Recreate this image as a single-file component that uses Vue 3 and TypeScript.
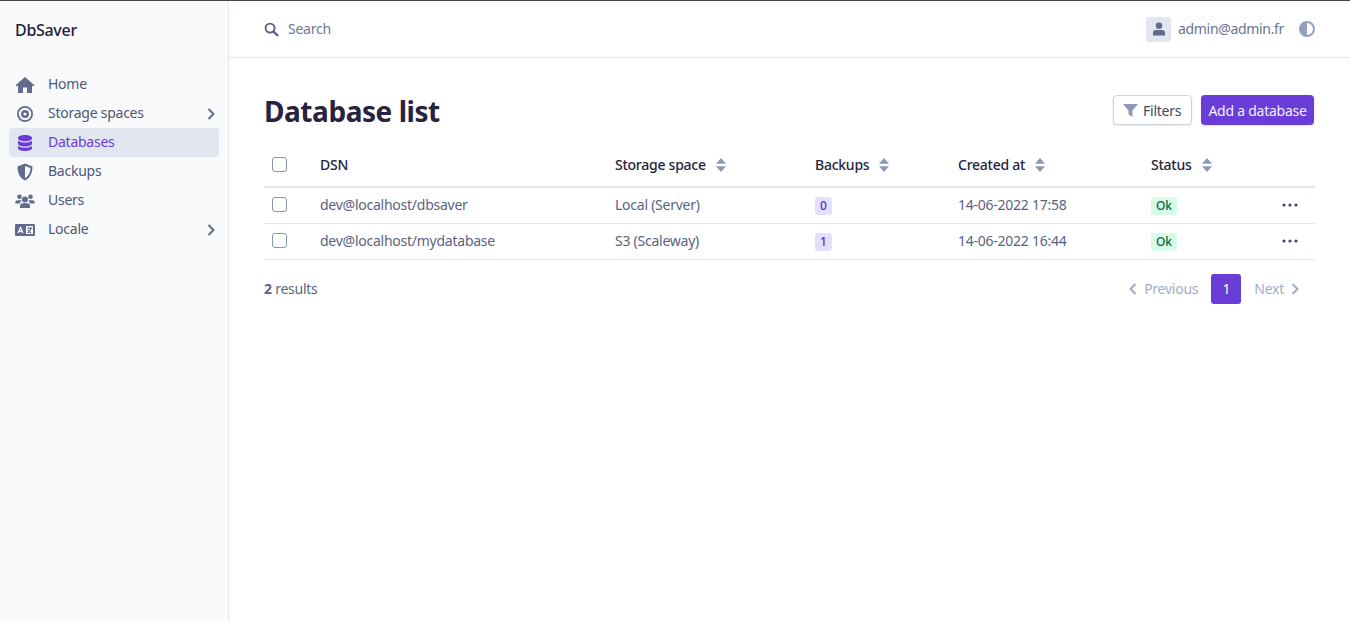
<script setup lang="ts">
interface Row { dsn: string; space: string; backups: number; created: string }
const rows: Row[] = [
  { dsn: 'dev@localhost/dbsaver', space: 'Local (Server)', backups: 0, created: '14-06-2022 17:58' },
  { dsn: 'dev@localhost/mydatabase', space: 'S3 (Scaleway)', backups: 1, created: '14-06-2022 16:44' },
]
const nav = [
  { label: 'Home', icon: 'home' },
  { label: 'Storage spaces', icon: 'target', more: true },
  { label: 'Databases', icon: 'db', active: true },
  { label: 'Backups', icon: 'shield' },
  { label: 'Users', icon: 'users' },
  { label: 'Locale', icon: 'locale', more: true },
]
const sorted = ['Storage space', 'Backups', 'Created at', 'Status']
</script>

<template>
  <div class="page">
    <aside class="side">
      <div class="brand">DbSaver</div>
      <nav class="nav">
        <a v-for="n in nav" :key="n.label" class="item" :class="{ active: n.active }">
          <svg class="ico" viewBox="0 0 20 20" fill="currentColor">
            <path v-if="n.icon === 'home'" d="M10 2 L19.500 10.200 L18.400 11.400 L17 10.300 V18 H12 V12.500 H8 V18 H3 V10.300 L1.600 11.400 L.5 10.200 Z" />
            <path v-else-if="n.icon === 'target'" fill-rule="evenodd" d="M10 2a8 8 0 1 1 0 16a8 8 0 0 1 0-16Zm0 1.800a6.200 6.200 0 1 0 0 12.400a6.200 6.200 0 0 0 0-12.400Zm0 2.200a4 4 0 1 1 0 8a4 4 0 0 1 0-8Zm0 2.400a1.600 1.600 0 1 0 0 3.200a1.600 1.600 0 0 0 0-3.200Z" />
            <path v-else-if="n.icon === 'db'" d="M10 2c4 0 7 1.200 7 2.800v.7C17 7.100 14 8.300 10 8.300S3 7.100 3 5.500v-.7C3 3.200 6 2 10 2ZM3 7.800c1.500 1.200 4.200 1.800 7 1.800s5.500-.6 7-1.800v2.900c0 1.600-3 2.800-7 2.800s-7-1.200-7-2.800ZM3 13c1.500 1.200 4.200 1.800 7 1.800s5.500-.6 7-1.800v2.200c0 1.600-3 2.800-7 2.800s-7-1.200-7-2.800Z" />
            <path v-else-if="n.icon === 'shield'" fill-rule="evenodd" d="M10 1.500 17.500 4.500C17.500 11 15 16 10 18.500C5 16 2.500 11 2.500 4.500ZM10 4v12.300c3.300-2 5.300-5.600 5.500-10.400Z" />
            <path v-else-if="n.icon === 'users'" d="M4.500 3.500a2.300 2.300 0 1 1 0 4.600a2.300 2.300 0 0 1 0-4.600Zm11 0a2.300 2.300 0 1 1 0 4.600a2.300 2.300 0 0 1 0-4.600ZM10 5.500a3 3 0 1 1 0 6a3 3 0 0 1 0-6ZM2.500 9.200h3.300c.3 0 .6.100.8.300a4 4 0 0 0-1.700 3H.3v-1.100c0-1.200 1-2.200 2.200-2.200Zm11.700 0h3.300c1.200 0 2.200 1 2.200 2.200v1.100h-4.900a4 4 0 0 0-1.400-3c.2-.2.500-.3.800-.3ZM7.500 12.300h5c1.400 0 2.500 1.100 2.500 2.500V17H5v-2.200c0-1.400 1.100-2.500 2.500-2.500Z" />
            <path v-else fill-rule="evenodd" d="M1.300 4h17.400c.7 0 1.300.6 1.300 1.300v9.400c0 .7-.6 1.300-1.300 1.300H1.300C.6 16 0 15.400 0 14.700V5.300C0 4.600.6 4 1.300 4ZM11 6v8h7V6ZM5 6.800 2.500 13h1.400l.4-1.100h2.400l.4 1.100h1.400L6 6.800ZM5.500 8.800 4.800 10.800h1.400ZM12.300 7.500h5v1.200h-1c-.3 1.400-.8 2.300-1.400 3l1.700 1-.5.9-2-1.200c-.5.400-1 .7-1.600.9l-.4-1c.5-.2.900-.4 1.300-.7-.4-.5-.7-1-.9-1.500l1-.3c.1.400.3.700.6 1 .4-.5.700-1.200.9-2.100h-2.700Z" />
          </svg>
          <span class="label">{{ n.label }}</span>
          <svg v-if="n.more" class="chev" viewBox="0 0 10 14" fill="none" stroke="currentColor" stroke-width="2"><path d="M2.500 2 7.500 7 2.500 12" /></svg>
        </a>
      </nav>
    </aside>

    <div class="main">
      <header class="top">
        <div class="search">
          <svg class="search-ico" viewBox="0 0 16 16" fill="none" stroke="currentColor" stroke-width="2"><circle cx="6.500" cy="6.500" r="4.800" /><path d="m10 10 5 5" stroke-width="2.400" /></svg>
          <span>Search</span>
        </div>
        <div class="user">
          <span class="avatar">
            <svg viewBox="0 0 14 14" fill="currentColor" width="14" height="14"><circle cx="7" cy="3.700" r="3.300" /><path d="M3.800 8h6.400C12 8 13 9.200 13 10.800V13.500H1V10.800C1 9.200 2 8 3.800 8Z" /></svg>
          </span>
          <span class="email">admin@admin.fr</span>
          <svg class="theme" viewBox="0 0 16 16" width="16" height="16"><circle cx="8" cy="8" r="7" fill="none" stroke="#94a0bd" stroke-width="2" /><path d="M8 1a7 7 0 0 0 0 14Z" fill="#94a0bd" /></svg>
        </div>
      </header>

      <main class="content">
        <div class="heading">
          <h1>Database list</h1>
          <div class="actions">
            <button class="btn ghost">
              <svg viewBox="0 0 14 12" width="15" height="13" fill="#8d98b5"><path d="M0 0h14L8.800 6.200V12L5.200 9.800V6.200Z" /></svg>
              Filters
            </button>
            <button class="btn primary">Add a database</button>
          </div>
        </div>

        <table class="table">
          <colgroup>
            <col class="c1" /><col class="c2" /><col class="c3" /><col class="c4" /><col class="c5" /><col class="c6" /><col />
          </colgroup>
          <thead>
            <tr>
              <th><span class="check"></span></th>
              <th>DSN</th>
              <th v-for="s in sorted" :key="s">
                <span class="sort-head">{{ s }}
                  <svg class="sort" viewBox="0 0 10 14" width="10" height="14" fill="#8d98b5"><path d="M5 0 10 5.800H0ZM5 14 0 8.200H10Z" /></svg>
                </span>
              </th>
              <th></th>
            </tr>
          </thead>
          <tbody>
            <tr v-for="r in rows" :key="r.dsn">
              <td><span class="check"></span></td>
              <td>{{ r.dsn }}</td>
              <td>{{ r.space }}</td>
              <td class="badge-cell"><span class="badge count">{{ r.backups }}</span></td>
              <td>{{ r.created }}</td>
              <td class="badge-cell"><span class="badge ok">Ok</span></td>
              <td class="dots-cell">
                <svg viewBox="0 0 16 4" width="16" height="4" fill="#3d4666"><circle cx="2" cy="2" r="1.600" /><circle cx="8" cy="2" r="1.600" /><circle cx="14" cy="2" r="1.600" /></svg>
              </td>
            </tr>
          </tbody>
        </table>

        <div class="foot">
          <div class="results"><b>2</b> results</div>
          <div class="pager">
            <span class="pg">
              <svg viewBox="0 0 10 14" width="10" height="14" fill="none" stroke="currentColor" stroke-width="2"><path d="M7.500 2 2.500 7 7.500 12" /></svg>
              Previous
            </span>
            <span class="cur">1</span>
            <span class="pg">
              Next
              <svg viewBox="0 0 10 14" width="10" height="14" fill="none" stroke="currentColor" stroke-width="2"><path d="M2.500 2 7.500 7 2.500 12" /></svg>
            </span>
          </div>
        </div>
      </main>
    </div>
  </div>
</template>

<style>
html, body { margin: 0; background: #fff; }
</style>

<style scoped>
.page {
  display: flex;
  height: 620px;
  border-top: 1px solid #454545;
  font-family: "Noto Sans", "Open Sans", sans-serif;
  font-size: 14px;
  letter-spacing: -0.25px;
  color: #5a6380;
  overflow: hidden;
}
.side {
  width: 228px;
  flex: none;
  background: #f9fafc;
  border-right: 1px solid #e3e8f0;
}
.brand {
  height: 57px;
  line-height: 59px;
  padding-left: 15px;
  font-size: 16px;
  font-weight: 500;
  letter-spacing: -0.3px;
  color: #231f3c;
}
.nav { padding: 12px 9px 0; }
.item {
  display: flex;
  align-items: center;
  height: 29px;
  border-radius: 4px;
  padding: 0 3px 0 6px;
  color: #4f5779;
}
.item.active { background: #e2e6f1; color: #6a3dd8; }
.ico { width: 20px; height: 20px; flex: none; color: #626b8b; }
.active .ico { color: #6a3dd8; }
.label { margin-left: 13px; flex: 1; padding-bottom: 2px; }
.chev { width: 10px; height: 14px; color: #626b8b; }

.main { flex: 1; min-width: 0; }
.top {
  height: 56px;
  border-bottom: 1px solid #e3e6ef;
  display: flex;
  align-items: center;
  justify-content: space-between;
  padding: 0 35px 0 35px;
}
.search { display: flex; align-items: center; gap: 9px; color: #6f7892; }
.search span { padding-bottom: 2px; }
.search-ico { width: 15px; height: 15px; color: #56607f; }
.user { display: flex; align-items: center; }
.avatar {
  width: 25px; height: 25px;
  border-radius: 3px;
  background: #e2e6f1;
  color: #626b8b;
  display: flex; align-items: center; justify-content: center;
}
.email { margin-left: 7px; color: #6a7391; letter-spacing: -0.33px; padding-bottom: 2px; }
.theme { margin-left: 15px; }

.content { padding: 0 35px; }
.heading {
  height: 92px;
  display: flex;
  justify-content: space-between;
  align-items: center;
  box-sizing: border-box;
  padding-top: 12px;
}
h1 { margin: 2px 0 0; font-size: 28px; font-weight: 700; letter-spacing: -0.45px; color: #27233f; line-height: 36px; }
.actions { display: flex; gap: 9px; margin-right: 1px; }
.btn {
  font: inherit;
  letter-spacing: inherit;
  height: 30px;
  border-radius: 4px;
  display: inline-flex;
  align-items: center;
  box-sizing: border-box;
  box-shadow: 0 1px 2px rgba(30, 40, 80, .12);
}
.ghost { width: 79px; gap: 5px; padding: 0 0 0 9px; background: #fff; border: 1px solid #cdd3e2; color: #3f4766; }
.primary { width: 113px; justify-content: center; padding: 0; background: #6a3dd8; border: 0; color: #f2efff; }

.table { width: 1051px; border-collapse: collapse; table-layout: fixed; margin-top: -1px; }
.c1 { width: 48px; } .c2 { width: 295px; } .c3 { width: 200px; } .c4 { width: 143px; } .c5 { width: 193px; } .c6 { width: 100px; }
th {
  height: 38px;
  padding: 0 8px 6px;
  box-sizing: border-box;
  text-align: left;
  font-weight: 500;
  color: #27233f;
  border-bottom: 2px solid #e3e6f1;
}
td {
  height: 36px;
  padding: 0 8px 2px;
  border-bottom: 1px solid #e3e8f0;
  box-sizing: border-box;
  white-space: nowrap;
}
.check {
  display: block;
  width: 15px; height: 15px;
  box-sizing: border-box;
  background: #fff;
  border: 1px solid #8a93ad;
  border-radius: 3px;
}
.sort-head { display: inline-flex; align-items: center; gap: 10px; }
.badge {
  display: inline-block;
  border-radius: 3px;
  font-size: 12px;
  font-weight: 500;
  letter-spacing: 0;
  line-height: 18px;
  text-align: center;
  vertical-align: middle;
}
td.badge-cell { padding-bottom: 0; }
.count { width: 17px; background: #e2e0fd; color: #5b2fc0; }
.ok { width: 26px; background: #d6fbe6; color: #0b6647; }
td.dots-cell { text-align: right; padding: 0 17px 4px 8px; }
.dots-cell svg { display: inline-block; vertical-align: middle; }

.foot {
  display: flex;
  justify-content: space-between;
  align-items: center;
  margin-top: 14px;
  height: 30px;
}
.results b { font-weight: 700; }
.pager { display: flex; align-items: center; color: #a4acc3; padding-right: 15px; }
.pg { display: inline-flex; align-items: center; gap: 6px; }
.cur {
  width: 30px; height: 30px;
  margin: 0 13px;
  border-radius: 3px;
  background: #6a3dd8;
  color: #fff;
  display: flex; align-items: center; justify-content: center;
}
</style>
